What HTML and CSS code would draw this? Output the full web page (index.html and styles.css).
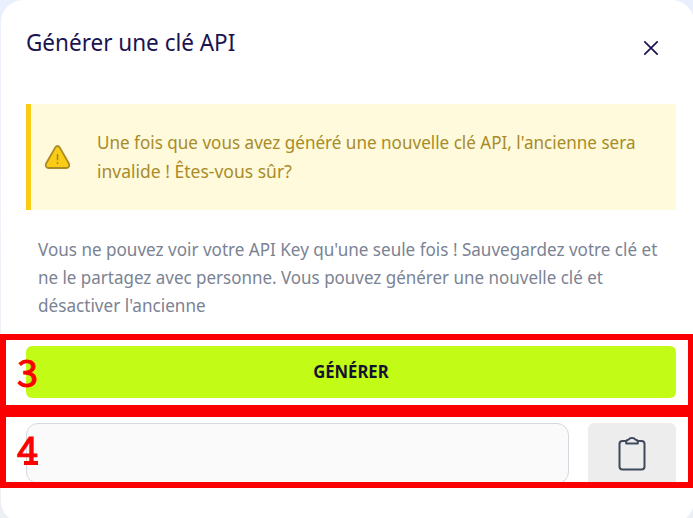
FILE: index.html
```html
<!DOCTYPE html>
<html lang="fr">
<head>
<meta charset="utf-8">
<title>Générer une clé API</title>
<link rel="stylesheet" href="styles.css">
</head>
<body>
<main class="modal">
  <header class="modal-head">
    <h1 class="title">Générer une clé API</h1>
    <button class="close" aria-label="Fermer"><svg width="16" height="16" viewBox="0 0 16 16"><path d="M1.3 1.3 14.7 14.7M14.7 1.3 1.3 14.7" fill="none" stroke="#1b1450" stroke-width="1.7"/></svg></button>
  </header>
  <section class="warning">
    <svg class="warning-icon" width="27" height="25" viewBox="0 0 27 25"><path d="M11.3 2.4Q13.5 -.4 15.7 2.4L25 18.7Q26 22.5 22.7 23H4.3Q1 22.5 2 18.7Z" fill="#facc15" stroke="#aa8b26" stroke-width="1.8"/><path d="M13.5 9v6.2M13.5 17.3v1.6" fill="none" stroke="#a3821c" stroke-width="1.5"/></svg>
    <p class="warning-text"><span class="line w1">Une fois que vous avez généré une nouvelle clé API, l'ancienne sera</span><span class="line w2">invalide ! Êtes-vous sûr?</span></p>
  </section>
  <p class="info"><span class="line i1">Vous ne pouvez voir votre API Key qu'une seule fois ! Sauvegardez votre clé et</span><span class="line i2">ne le partagez avec personne. Vous pouvez générer une nouvelle clé et</span><span class="line i3">désactiver l'ancienne</span></p>
  <button class="generate"><span class="generate-label">GÉNÉRER</span></button>
  <div class="key-row">
    <input class="key" aria-label="Clé API" readonly>
    <button class="copy" aria-label="Copier"><svg width="28" height="36" viewBox="0 0 28 36"><path d="M8 5H4.5Q1.5 5 1.5 8V30.5Q1.5 33.5 4.5 33.5H23.5Q26.5 33.5 26.5 30.5V8Q26.5 5 23.5 5H20" fill="none" stroke="#3f4b5b" stroke-width="2"/><path d="M8.2 7.5V6Q8.2 4 10.4 3.8Q11.5 2 14 2T17.6 3.8Q19.8 4 19.8 6V7.5Z" fill="#ededed" stroke="#3f4b5b" stroke-width="2" stroke-linejoin="round"/></svg></button>
  </div>
</main>
<div class="mark mark-3"><span class="digit">3</span></div>
<div class="mark mark-4"><span class="digit four">4</span></div>
</body>
</html>
```

FILE: styles.css
```css
* { box-sizing: border-box; }
body {
  margin: 0;
  height: 518px;
  overflow: hidden;
  position: relative;
  background: linear-gradient(#e9effc, #f2f2fa 40%, #eceff3);
  font-family: "Noto Sans", sans-serif;
}
button { border: 0; padding: 0; margin: 0; background: none; font-family: inherit; }
.modal {
  margin-left: 1px;
  width: 693px;
  height: 523px;
  padding: 24px 18px 0 25px;
  border-radius: 22px;
  background: #fff;
}
.modal-head { display: flex; justify-content: space-between; height: 80px; }
.title {
  margin: 0;
  font-size: 23.5px;
  font-weight: 400;
  line-height: 36px;
  color: #1b1450;
  white-space: nowrap;
  transform: scaleX(.957);
  transform-origin: left;
}
.close { width: 16px; height: 16px; margin: 16px 17px 0 0; }
svg { display: block; }
.warning {
  display: flex;
  align-items: center;
  width: 650px;
  height: 106px;
  padding-left: 13px;
  border-left: 5px solid #facc15;
  background: #fefadb;
}
.warning-icon { flex: none; margin-right: 26px; }
.warning-text { margin: -1px 0 0; color: #a98b29; }
.line {
  display: block;
  width: max-content;
  white-space: nowrap;
  font-size: 18.8px;
  line-height: 28.2px;
  transform: scaleX(.909);
  transform-origin: left;
}
.w2 { transform: scaleX(.932); }
.i2 { transform: scaleX(.904); }
.i3 { transform: scaleX(.912); }
.info { margin: 25px 0 0 12px; height: 111px; color: #7b8393; }
.generate {
  display: flex;
  align-items: center;
  justify-content: center;
  width: 650px;
  height: 52px;
  border-radius: 6px;
  background: #c2fb16;
  color: #15122f;
}
.generate-label { margin-top: -3px; font-size: 18.5px; font-weight: 700; transform: scaleX(.9); }
.key-row { display: flex; gap: 19px; margin-top: 25px; }
.key {
  width: 543px;
  height: 61px;
  border: 1px solid #d5d8df;
  border-radius: 12px;
  background: #fafafa;
}
.copy {
  display: flex;
  justify-content: center;
  width: 88px;
  height: 65px;
  padding-top: 13px;
  border-radius: 6px;
  background: #ededed;
}
.mark { position: absolute; left: 0; width: 693px; border: 6px solid #fa0000; border-right-width: 5px; }
.mark-3 { top: 334px; height: 77px; }
.mark-4 { top: 411px; height: 77px; }
.digit {
  display: block;
  position: relative;
  width: max-content;
  margin-left: 11px;
  font: 400 38px/62px "Noto Sans CJK SC", sans-serif;
  -webkit-text-stroke: 1px #fa0000;
  color: #fa0000;
}
/* slab foot under the stem of the 4 */
.four::after {
  content: "";
  position: absolute;
  left: 7px;
  top: 44px;
  width: 14px;
  height: 4px;
  background: #fa0000;
}
```
